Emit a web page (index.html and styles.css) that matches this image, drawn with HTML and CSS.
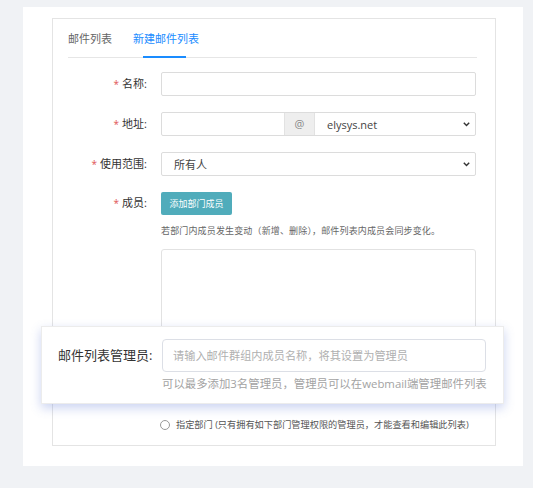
FILE: index.html
```html
<!DOCTYPE html>
<html lang="zh-CN">
<head>
<meta charset="utf-8">
<title>新建邮件列表</title>
<link rel="stylesheet" href="styles.css">
</head>
<body>
<div class="panel">
  <div class="card">
    <div class="tabs">
      <div class="tab">邮件列表</div>
      <div class="tab active">新建邮件列表</div>
    </div>
    <div class="form">
      <div class="row first">
        <div class="label"><span class="req">*</span>名称:</div>
        <div class="field input"></div>
      </div>
      <div class="row">
        <div class="label"><span class="req">*</span>地址:</div>
        <div class="field group">
          <div class="addr"></div>
          <div class="at">@</div>
          <div class="sel domain"><span>elysys.net</span>
            <svg class="chev" width="7" height="5" viewBox="0 0 7 5"><path d="M0.8 0.8 L3.5 3.6 L6.2 0.8" fill="none" stroke="#333" stroke-width="1.4"/></svg>
          </div>
        </div>
      </div>
      <div class="row">
        <div class="label"><span class="req">*</span>使用范围:</div>
        <div class="field sel scope"><span>所有人</span>
          <svg class="chev" width="7" height="5" viewBox="0 0 7 5"><path d="M0.8 0.8 L3.5 3.6 L6.2 0.8" fill="none" stroke="#333" stroke-width="1.4"/></svg>
        </div>
      </div>
      <div class="row btnrow">
        <div class="label"><span class="req">*</span>成员:</div>
        <div class="btn">添加部门成员</div>
      </div>
      <div class="sub help">若部门内成员发生变动（新增、删除），邮件列表内成员会同步变化。</div>
      <div class="sub box"></div>
      <div class="sub radio-row">
        <span class="radio"></span>
        <span class="radio-text">指定部门 (只有拥有如下部门管理权限的管理员，才能查看和编辑此列表)</span>
      </div>
    </div>
  </div>
  <div class="popup">
    <div class="pop-row">
      <div class="pop-label">邮件列表管理员:</div>
      <div class="pop-input">请输入邮件群组内成员名称，将其设置为管理员</div>
    </div>
    <div class="pop-help">可以最多添加3名管理员，管理员可以在webmail端管理邮件列表</div>
  </div>
</div>
</body>
</html>
```
FILE: styles.css
```css
html, body {
  margin: 0;
  padding: 0;
}
body {
  background: #f0f2f5;
  font-family: "Open Sans", "Noto Sans CJK SC", sans-serif;
  color: #333;
  width: 533px;
  height: 488px;
  overflow: hidden;
}
.panel {
  position: relative;
  margin: 7px 10px 0 23px;
  width: 500px;
  height: 459px;
  box-sizing: border-box;
  padding: 11px 27px 0 29px;
  background: #fff;
}
.card {
  height: 428px;
  box-sizing: border-box;
  border: 1px solid #e4e4e4;
  padding: 0 18px 0 15px;
}
.tabs {
  display: flex;
  gap: 21px;
  height: 38px;
  border-bottom: 1px solid #e6e6e6;
  font-size: 11px;
  line-height: 39px;
}
.tab {
  position: relative;
  color: #666;
}
.tab.active {
  color: #1a8cff;
}
.tab.active::after {
  content: "";
  position: absolute;
  left: 10px;
  width: 43px;
  bottom: -1px;
  height: 2px;
  background: #1a8cff;
}
.form {
  margin-top: 14px;
}
.row {
  display: flex;
  align-items: center;
  margin-top: 16px;
}
.row.first {
  margin-top: 0;
}
.row.btnrow {
  margin-top: 15px;
}
.label {
  width: 79px;
  margin-right: 14px;
  text-align: right;
  font-size: 11px;
  line-height: 24px;
  color: #333;
  white-space: nowrap;
}
.req {
  color: #e05555;
  margin-right: 3px;
  font-size: 10px;
}
.field {
  width: 315px;
  height: 24px;
  box-sizing: border-box;
}
.input {
  border: 1px solid #dcdcdc;
  border-radius: 2px;
}
.group {
  display: flex;
  border: 1px solid #dcdcdc;
  border-radius: 2px;
}
.addr {
  width: 122px;
}
.at {
  width: 29px;
  background: #eeeeee;
  border-left: 1px solid #e2e2e2;
  border-right: 1px solid #e2e2e2;
  color: #888;
  font-size: 11px;
  line-height: 22px;
  text-align: center;
}
.sel {
  display: flex;
  align-items: center;
  justify-content: space-between;
  font-size: 11px;
  color: #444;
}
.domain {
  flex: 1;
  padding: 0 5px 0 12px;
}
.scope {
  border: 1px solid #dcdcdc;
  border-radius: 2px;
  padding: 0 5px 0 12px;
}
.chev {
  display: block;
}
.btn {
  width: 71px;
  height: 23px;
  line-height: 23px;
  text-align: center;
  background: #50acbb;
  color: #fff;
  font-size: 9px;
  border-radius: 2px;
}
.sub {
  margin-left: 93px;
}
.help {
  margin-top: 9px;
  font-size: 9px;
  letter-spacing: 0.15px;
  line-height: 14px;
  color: #666;
  white-space: nowrap;
}
.box {
  margin-top: 11px;
  width: 315px;
  height: 140px;
  box-sizing: border-box;
  border: 1px solid #e2e2e2;
  border-radius: 3px;
}
.radio-row {
  margin-top: 29px;
  display: flex;
  align-items: center;
  margin-left: 92px;
  line-height: 14px;
}
.radio {
  width: 10px;
  height: 10px;
  box-sizing: border-box;
  border: 1px solid #999;
  border-radius: 50%;
  margin-right: 6px;
}
.radio-text {
  font-size: 9.2px;
  color: #555;
  white-space: nowrap;
}
.popup {
  position: absolute;
  left: 18px;
  top: 319px;
  width: 463px;
  height: 78px;
  box-sizing: border-box;
  padding: 12px 17px 0 16px;
  background: #fff;
  border: 1px solid #ececec;
  box-shadow: 0 4px 10px rgba(80, 110, 210, 0.3);
}
.pop-row {
  display: flex;
  align-items: center;
}
.pop-label {
  width: 104px;
  font-size: 13px;
  line-height: 33px;
  color: #333;
  white-space: nowrap;
}
.pop-input {
  width: 324px;
  height: 33px;
  box-sizing: border-box;
  border: 1px solid #dcdfe6;
  border-radius: 4px;
  padding-left: 10px;
  font-size: 11.2px;
  line-height: 31px;
  color: #b0b0b0;
  white-space: nowrap;
}
.pop-help {
  margin: 4px 0 0 104px;
  font-size: 11.4px;
  line-height: 16px;
  color: #a3a3a3;
  white-space: nowrap;
}
```
